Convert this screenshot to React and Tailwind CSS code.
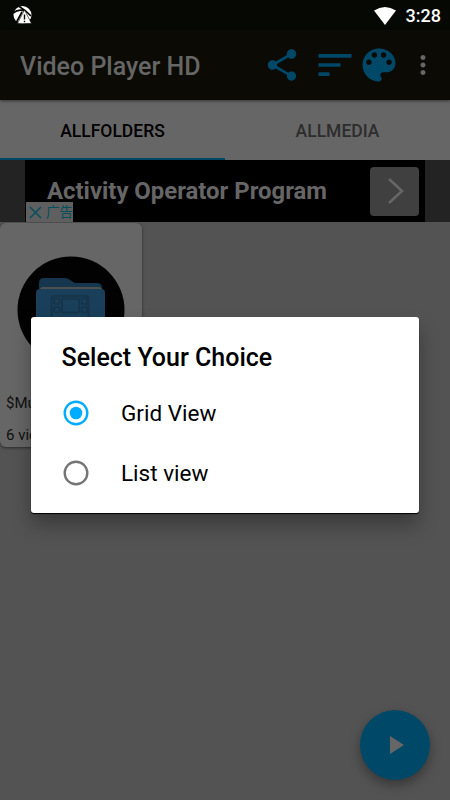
import React, { useState } from "react";
import { MdMoreVert, MdShare, MdSort } from "react-icons/md";

const StatusBar = () => (
  <div className="flex h-[30px] items-center justify-between bg-[#060804] pl-3 pr-[9px]">
    <svg width="21" height="20" viewBox="0 0 21 20">
      <circle cx="10.5" cy="10" r="9" fill="#fff" />
      <path
        d="M1 8C5 5 9 4.5 12 6M5.5 0C8 3 10.5 2 19 11M10 7L3.5 19"
        fill="none"
        stroke="#060804"
        strokeWidth="1.7"
      />
      <path d="M12.5 5L19.5 18.5H5.5z" fill="#fff" stroke="#060804" strokeWidth="0.6" />
      <path d="M12.5 9.5v5M12.5 15.7v1.6" stroke="#060804" strokeWidth="1.4" />
    </svg>
    <div className="flex items-center gap-[10px] pt-[2px]">
      <svg width="22" height="18" viewBox="0 0 22 18">
        <path d="M0 3.6Q11-3.6 22 3.6L11 18z" fill="#fff" />
      </svg>
      <span className="text-[18px] font-medium leading-[28px] text-white">
        3:28
      </span>
    </div>
  </div>
);

const PaletteIcon = () => (
  <svg width="44" height="44" viewBox="0 0 24 24" fill="currentColor">
    <path d="M12 3c-4.97 0-9 4.03-9 9s4.03 9 9 9c.83 0 1.5-.67 1.5-1.5 0-.39-.15-.74-.39-1.01-.23-.26-.38-.61-.38-.99 0-.83.67-1.5 1.5-1.5H16c2.76 0 5-2.24 5-5 0-4.42-4.03-8-9-8zm-5.5 9c-.83 0-1.5-.67-1.5-1.5S5.67 9 6.5 9 8 9.67 8 10.5 7.33 12 6.5 12zm3-4C8.67 8 8 7.33 8 6.5S8.67 5 9.5 5s1.5.67 1.5 1.5S10.33 8 9.5 8zm5 0c-.83 0-1.5-.67-1.5-1.5S13.67 5 14.5 5s1.5.67 1.5 1.5S15.33 8 14.5 8zm3 4c-.83 0-1.5-.67-1.5-1.5S16.67 9 17.5 9s1.5.67 1.5 1.5-.67 1.5-1.5 1.5z" />
  </svg>
);

const Toolbar = () => (
  <header className="relative z-10 flex h-[70px] items-center bg-[#0b0a04] pl-5 text-[#004868] shadow-[0_1px_3px_rgba(0,0,0,0.5)]">
    <h1 className="w-[242.5px] whitespace-nowrap pt-[3px] text-[25px] font-medium text-[#666]">
      Video Player HD
    </h1>
    <MdShare size={38} />
    <MdSort size={44} className="ml-[12px]" />
    <PaletteIcon />
    <MdMoreVert size={30} className="ml-[7px] text-[#666]" />
  </header>
);

const Tabs = () => (
  <nav className="flex h-[60px] bg-[#666] text-[17.5px] font-medium">
    <div className="flex w-1/2 items-center justify-center border-b-[2.5px] border-[#004868] pt-[4px] text-black">
      ALLFOLDERS
    </div>
    <div className="flex w-1/2 items-center justify-center pt-[2px] text-[#2d2d2d]">
      ALLMEDIA
    </div>
  </nav>
);

const AdBanner = () => (
  <div className="flex h-[62px] justify-center bg-[#232323]">
    <div className="relative flex w-[400px] items-center justify-between bg-black pl-[22px] pr-[6px]">
      <span className="whitespace-nowrap text-[23.9px] font-bold leading-[22px] text-[#666]">
        Activity Operator Program
      </span>
      <div className="flex h-[49px] w-[49px] items-center justify-center rounded bg-[#404040]">
        <svg width="18" height="28" viewBox="0 0 18 28" className="ml-[3px]">
          <path d="M2 2L15 14L2 26" fill="none" stroke="#666" strokeWidth="2.6" />
        </svg>
      </div>
      <div className="absolute bottom-0 left-px flex h-[20px] w-[47px] items-center gap-1 overflow-hidden bg-[#5f5f5f] pl-[3px] text-[#004f5d]">
        <svg width="13" height="13" viewBox="0 0 13 13" className="shrink-0">
          <path d="M1 1L12 12M12 1L1 12" stroke="currentColor" strokeWidth="1.5" />
        </svg>
        <span className="whitespace-nowrap font-['Noto_Sans_CJK_SC',sans-serif] text-[13.5px] leading-none">
          广告
        </span>
      </div>
    </div>
  </div>
);

const FolderIcon = () => (
  <svg width="108" height="108" viewBox="0 0 108 108">
    <circle cx="54" cy="54" r="53.5" fill="#020202" />
    <path
      d="M22 36V27q0-5 5-5h20q4 0 6 2l5 3h22q5 0 5 5v5z"
      fill="#16364d"
    />
    <path d="M23 34q0-3 3-3h55q4 0 4 3v5H23z" fill="#505050" />
    <path d="M19 37q0-4 4-4h61q4 0 4 4v39q0 4-4 4H23q-4 0-4-4z" fill="#193f5a" />
    <g fill="none" stroke="#16344a" strokeWidth="1.8">
      <rect x="34.5" y="40" width="37" height="30" rx="2.5" />
      <rect x="45" y="42.5" width="17" height="14" rx="1" />
      <rect x="37" y="42.5" width="5.5" height="5.5" rx="1" />
      <rect x="37" y="51" width="5.5" height="5.5" rx="1" />
      <rect x="64.5" y="42.5" width="5.5" height="5.5" rx="1" />
      <rect x="64.5" y="51" width="5.5" height="5.5" rx="1" />
    </g>
  </svg>
);

const FolderCard = () => (
  <div className="mt-px flex h-[224px] w-[142px] flex-col items-center rounded-[6px] bg-[#666] pt-[33px] shadow-[0_1px_3px_rgba(0,0,0,0.5)]">
    <FolderIcon />
    <div className="mt-[28px] w-full pl-[6px] text-[15px] leading-[22px] text-[#101010]">
      <p>$Music</p>
      <p className="mt-[10px]">6 videos</p>
    </div>
  </div>
);

const Radio = ({ checked }) => (
  <svg width="26" height="26" viewBox="0 0 26 26">
    <circle
      cx="13"
      cy="13"
      r="11.3"
      fill="none"
      stroke={checked ? "#00acff" : "#757575"}
      strokeWidth="2.4"
    />
    {checked && <circle cx="13" cy="13" r="6.3" fill="#00acff" />}
  </svg>
);

const ViewDialog = () => {
  const [view, setView] = useState("Grid View");

  return (
    <div className="h-[196px] w-[388px] rounded-[3px] bg-white pl-[30.5px] pt-[25px] text-black shadow-[0_1px_1px_#000,0_12px_20px_rgba(0,0,0,0.3)]">
      <h2 className="text-[25px] font-medium leading-[32px]">
        Select Your Choice
      </h2>
      <div className="mt-[9px]">
        {["Grid View", "List view"].map((name) => (
          <button
            key={name}
            onClick={() => setView(name)}
            className="flex h-[60px] w-full items-center gap-[32px] pl-[1.5px] text-[22.5px]"
          >
            <Radio checked={view === name} />
            <span className="pt-[2px]">{name}</span>
          </button>
        ))}
      </div>
    </div>
  );
};

const App = () => (
  <div className="relative flex h-[800px] w-[450px] flex-col overflow-hidden bg-[#535353] font-[Roboto,sans-serif]">
    <StatusBar />
    <Toolbar />
    <Tabs />
    <AdBanner />
    <FolderCard />
    <div className="absolute bottom-5 right-5 flex h-[70px] w-[70px] items-center justify-center rounded-full bg-[#004868] shadow-[0_5px_12px_rgba(0,0,0,0.35)]">
      <svg width="14" height="18" viewBox="0 0 14 18" className="ml-[3px]">
        <path d="M0 0L14 9L0 18z" fill="#666" />
      </svg>
    </div>
    <div className="absolute inset-0 z-20 flex justify-center pt-[317px]">
      <ViewDialog />
    </div>
  </div>
);

export default App;
